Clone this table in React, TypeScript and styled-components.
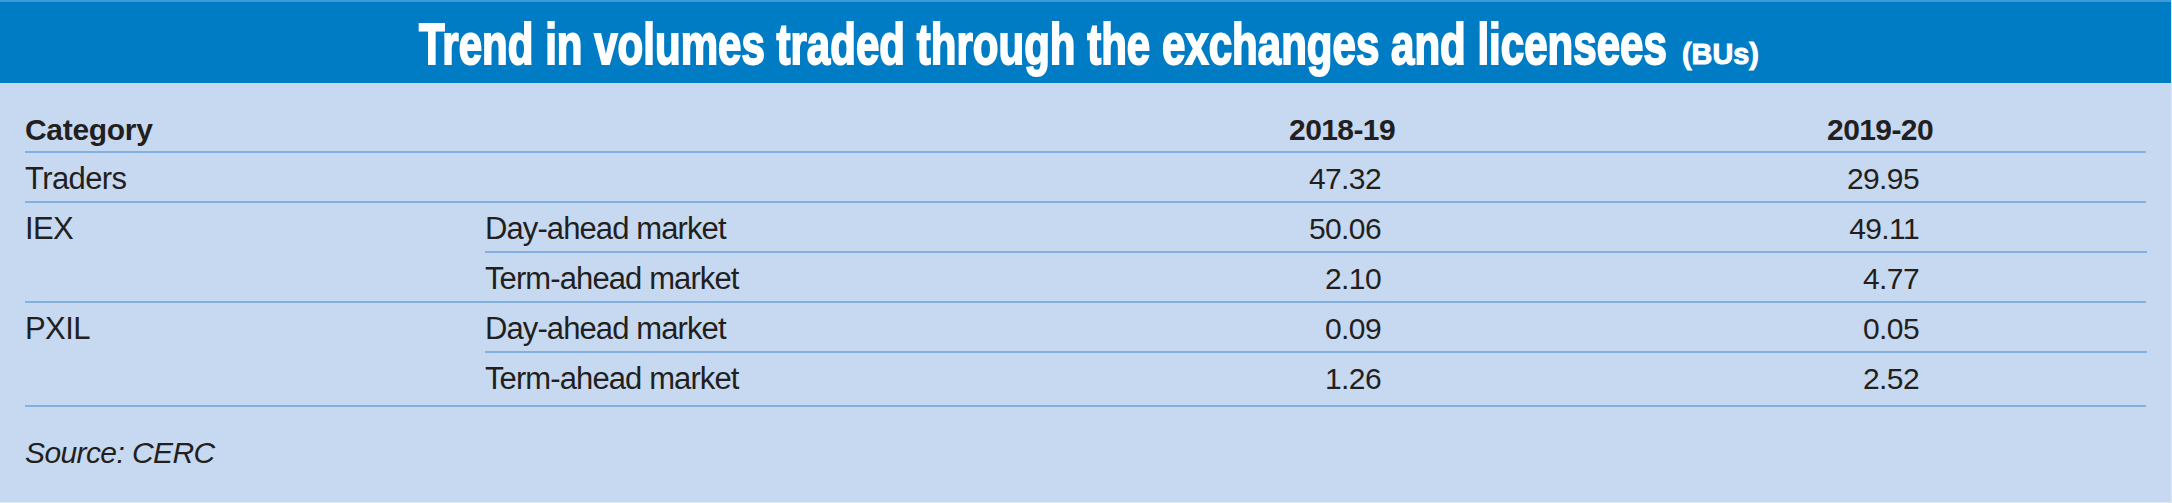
import React from "react";
import styled, { createGlobalStyle } from "styled-components";

const GlobalStyle = createGlobalStyle`
  html, body { margin: 0; padding: 0; background: #c6d9f1; }
  body { font-family: "Liberation Sans", Arial, sans-serif; color: #231f20; }
  * { box-sizing: border-box; }
`;

const LINE = "#82b1e1";

const Panel = styled.div`
  width: 2172px;
  height: 503px;
  background: #c6d9f1;
  border-right: 1px solid #dde8f6;
  border-bottom: 1px solid #dde8f6;
  display: flex;
  flex-direction: column;
  overflow: hidden;
`;

const TitleBar = styled.header`
  height: 83px;
  flex: none;
  background: #007cc4;
  border-top: 2px solid #3f9bd6;
  display: flex;
  justify-content: center;
  align-items: baseline;
  padding-top: 13px;
  padding-left: 10px;
  color: #ffffff;
  font-weight: 700;
  line-height: 57px;
`;

const TitleMain = styled.span`
  display: inline-block;
  font-size: 58px;
  transform: scaleX(0.725);
  transform-origin: left center;
  margin-right: -470px;
  -webkit-text-stroke: 2px #ffffff;
  white-space: nowrap;
`;

const TitleUnit = styled.span`
  display: inline-block;
  font-size: 30px;
  margin-left: 12px;
  transform: scaleX(0.96);
  transform-origin: left center;
  -webkit-text-stroke: 1px #ffffff;
  white-space: nowrap;
`;

const Table = styled.div`
  margin: 0 25px;
  display: flex;
  flex-direction: column;
`;

const cols = "460px 710px 200px 538px";

const HeadRow = styled.div`
  display: grid;
  grid-template-columns: ${cols};
  padding-right: 214px;
  height: 70px;
  align-items: end;
  border-bottom: 2px solid ${LINE};
  font-weight: 700;
  font-size: 30px;
  line-height: 42px;
`;

const HeadCell = styled.div<{ $num?: boolean }>`
  text-align: ${(p) => (p.$num ? "right" : "left")};
  letter-spacing: ${(p) => (p.$num ? "-0.6px" : "-0.3px")};
`;

const Group = styled.div`
  display: grid;
  grid-template-columns: 460px 1fr;
  border-bottom: 2px solid ${LINE};
`;

const CategoryCell = styled.div`
  font-size: 31px;
  line-height: 44px;
  padding-top: 4px;
  letter-spacing: -0.6px;
`;

const SubRows = styled.div`
  display: flex;
  flex-direction: column;
`;

const SubRow = styled.div<{ $divider?: boolean; $tall?: boolean }>`
  display: grid;
  grid-template-columns: 710px 200px 538px;
  padding-right: 214px;
  height: ${(p) => (p.$divider ? 50 : p.$tall ? 52 : 48)}px;
  padding-top: 4px;
  border-bottom: ${(p) => (p.$divider ? `2px solid ${LINE}` : "none")};
  line-height: 44px;
`;

const LabelCell = styled.div`
  font-size: 31px;
  letter-spacing: -0.9px;
  white-space: nowrap;
`;

const ValueCell = styled.div`
  font-size: 30px;
  text-align: right;
  padding-right: 14px;
  letter-spacing: -0.6px;
`;

const Source = styled.div`
  padding-top: 24px;
  margin-left: 25px;
  font-size: 30px;
  line-height: 44px;
  font-style: italic;
  letter-spacing: -0.6px;
`;

type Sub = { label: string; a: string; b: string };
type GroupData = { category: string; rows: Sub[] };

const data: GroupData[] = [
  { category: "Traders", rows: [{ label: "", a: "47.32", b: "29.95" }] },
  {
    category: "IEX",
    rows: [
      { label: "Day-ahead market", a: "50.06", b: "49.11" },
      { label: "Term-ahead market", a: "2.10", b: "4.77" },
    ],
  },
  {
    category: "PXIL",
    rows: [
      { label: "Day-ahead market", a: "0.09", b: "0.05" },
      { label: "Term-ahead market", a: "1.26", b: "2.52" },
    ],
  },
];

export default function App() {
  return (
    <>
      <GlobalStyle />
      <Panel>
        <TitleBar>
          <TitleMain>Trend in volumes traded through the exchanges and licensees</TitleMain>
          <TitleUnit>(BUs)</TitleUnit>
        </TitleBar>
        <Table>
          <HeadRow>
            <HeadCell>Category</HeadCell>
            <HeadCell />
            <HeadCell $num>2018-19</HeadCell>
            <HeadCell $num>2019-20</HeadCell>
          </HeadRow>
          {data.map((g, gi) => (
            <Group key={g.category}>
              <CategoryCell>{g.category}</CategoryCell>
              <SubRows>
                {g.rows.map((r, i) => (
                  <SubRow
                    key={i}
                    $divider={i < g.rows.length - 1}
                    $tall={gi === data.length - 1 && i === g.rows.length - 1}
                  >
                    <LabelCell>{r.label}</LabelCell>
                    <ValueCell>{r.a}</ValueCell>
                    <ValueCell>{r.b}</ValueCell>
                  </SubRow>
                ))}
              </SubRows>
            </Group>
          ))}
        </Table>
        <Source>Source: CERC</Source>
      </Panel>
    </>
  );
}
